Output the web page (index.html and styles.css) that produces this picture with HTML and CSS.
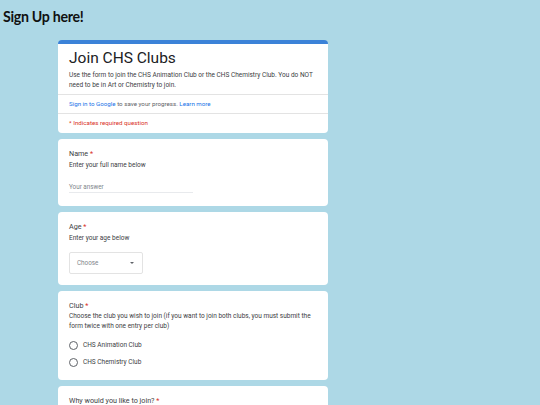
FILE: index.html
```html
<!DOCTYPE html>
<html>
<head>
<meta charset="utf-8">
<link rel="stylesheet" href="styles.css">
</head>
<body>
<h1 class="page-title">Sign Up here!</h1>
<div class="form">
  <div class="card card-head">
    <div class="head-main">
      <div class="form-title">Join CHS Clubs</div>
      <div class="form-desc">Use the form to join the CHS Animation Club or the CHS Chemistry Club. You do NOT need to be in Art or Chemistry to join.</div>
    </div>
    <div class="head-row"><span class="link">Sign in to Google</span> to save your progress. <span class="link">Learn more</span></div>
    <div class="head-row req">* Indicates required question</div>
  </div>

  <div class="card q">
    <div class="q-title">Name <span class="star">*</span></div>
    <div class="q-desc">Enter your full name below</div>
    <div class="answer">Your answer</div>
  </div>

  <div class="card q q-age">
    <div class="q-title">Age <span class="star">*</span></div>
    <div class="q-desc">Enter your age below</div>
    <div class="select"><span>Choose</span><span class="caret"></span></div>
  </div>

  <div class="card q q-club">
    <div class="q-title">Club <span class="star">*</span></div>
    <div class="q-desc">Choose the club you wish to join (if you want to join both clubs, you must submit the form twice with one entry per club)</div>
    <div class="options">
      <div class="opt"><span class="radio"></span>CHS Animation Club</div>
      <div class="opt"><span class="radio"></span>CHS Chemistry Club</div>
    </div>
  </div>

  <div class="card q q-last">
    <div class="q-title">Why would you like to join? <span class="star">*</span></div>
  </div>
</div>
</body>
</html>
```
FILE: styles.css
```css
html, body {
  margin: 0;
  padding: 0;
  background: #add8e6;
  overflow: hidden;
  height: 405px;
}
body {
  font-family: Roboto, "Liberation Sans", sans-serif;
  color: #3c4043;
}
.page-title {
  font-family: Lato, "Liberation Sans", sans-serif;
  font-weight: 700;
  font-size: 14.2px;
  line-height: 20px;
  margin: 7px 0 0 3px;
  letter-spacing: -0.3px;
  color: #111;
}
.form {
  width: 270px;
  margin: 13px 0 0 58px;
  display: flex;
  flex-direction: column;
  gap: 6px;
}
.card {
  background: #fff;
  border-radius: 4px;
}
.card-head {
  border-top: 4px solid #3b82d8;
}
.head-main {
  padding: 4px 11px 4px;
}
.form-title {
  font-size: 15.5px;
  line-height: 20px;
  color: #202124;
}
.form-desc {
  margin-top: 2px;
  font-size: 6.5px;
  line-height: 10px;
}
.head-row {
  border-top: 1px solid #e3e3e3;
  font-size: 6.2px;
  line-height: 18px;
  padding: 0 11px;
  color: #5f6368;
}
.head-row.req {
  line-height: 19px;
  color: #d93025;
}
.link { color: #1a73e8; }
.q {
  padding: 10px 11px 13px;
}
.q-title {
  font-size: 7.2px;
  line-height: 10px;
}
.star { color: #d93025; }
.q-desc {
  margin-top: 1px;
  font-size: 6.5px;
  line-height: 10px;
}
.answer {
  width: 124px;
  margin-top: 12px;
  font-size: 6.3px;
  line-height: 10px;
  color: #80868b;
  border-bottom: 1px solid #e8eaed;
}
.q-age {
  padding-bottom: 11px;
}
.select {
  margin-top: 9px;
  width: 74px;
  height: 22px;
  box-sizing: border-box;
  border: 1px solid #e3e3e3;
  border-radius: 2px;
  display: flex;
  align-items: center;
  justify-content: space-between;
  padding: 0 7px;
  font-size: 6.3px;
  color: #80868b;
}
.caret {
  width: 0;
  height: 0;
  border-left: 2.5px solid transparent;
  border-right: 2.5px solid transparent;
  border-top: 2.5px solid #5f6368;
  margin-right: 1px;
}
.q-club .q-desc {
  line-height: 9.5px;
}
.options {
  margin-top: 9px;
  display: flex;
  flex-direction: column;
  gap: 7px;
}
.opt {
  display: flex;
  align-items: center;
  gap: 5px;
  font-size: 6.5px;
  line-height: 10px;
}
.radio {
  width: 9px;
  height: 9px;
  box-sizing: border-box;
  border: 1.3px solid #5f6368;
  border-radius: 50%;
}
.q-last {
  padding-bottom: 6px;
}
```
